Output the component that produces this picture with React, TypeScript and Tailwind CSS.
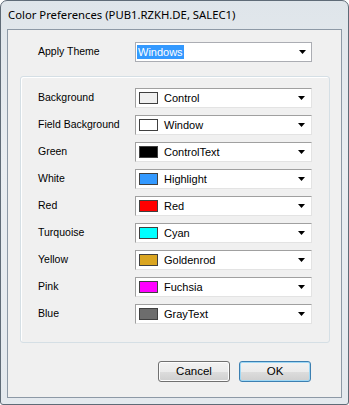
import React from 'react';

interface ColorRow {
  label: string;
  value: string;
  swatch: string;
}

const rows: ColorRow[] = [
  { label: 'Background', value: 'Control', swatch: 'bg-[#f0f0f0]' },
  { label: 'Field Background', value: 'Window', swatch: 'bg-white' },
  { label: 'Green', value: 'ControlText', swatch: 'bg-black' },
  { label: 'White', value: 'Highlight', swatch: 'bg-[#3399ff]' },
  { label: 'Red', value: 'Red', swatch: 'bg-[#ff0000]' },
  { label: 'Turquoise', value: 'Cyan', swatch: 'bg-[#00ffff]' },
  { label: 'Yellow', value: 'Goldenrod', swatch: 'bg-[#daa520]' },
  { label: 'Pink', value: 'Fuchsia', swatch: 'bg-[#ff00ff]' },
  { label: 'Blue', value: 'GrayText', swatch: 'bg-[#6d6d6d]' },
];

const Arrow: React.FC = () => (
  <svg width="7" height="4" viewBox="0 0 7 4" className="shrink-0">
    <path d="M0 0h7L3.5 4z" fill="#000" />
  </svg>
);

const ColorCombo: React.FC<{ row: ColorRow }> = ({ row }) => (
  <div className="flex items-center w-[177px] h-[20px] bg-white border border-t-[#a0a0a0] border-l-[#a0a0a0] border-r-[#e3e3e3] border-b-[#e3e3e3] pl-[3px] pr-[6px]">
    <span className={`w-[19px] h-[12px] border border-[#404040] ${row.swatch}`} />
    <span className="ml-[6px] grow text-[11px] text-black">{row.value}</span>
    <Arrow />
  </div>
);

const WinButton: React.FC<{ label: string; primary?: boolean }> = ({ label, primary }) => (
  <button
    type="button"
    className={`w-[72px] h-[21px] rounded-[3px] border text-[11.5px] text-black bg-[linear-gradient(#f2f2f2_0%,#ebebeb_50%,#dddddd_51%,#cfcfcf_100%)] ${
      primary
        ? 'border-[#3c7fb1] shadow-[inset_0_0_0_1px_#9fd8f5]'
        : 'border-[#707070] shadow-[inset_0_0_0_1px_#fcfcfc]'
    }`}
  >
    {label}
  </button>
);

export default function App() {
  return (
    <div
      className="w-[349px] h-[405px] bg-white"
      style={{ fontFamily: '"Liberation Sans", Arial, sans-serif' }}
    >
      <div className="flex flex-col w-full h-full rounded-t-[7px] rounded-b-[3px] border border-[#5f6b77] bg-[linear-gradient(180deg,#dfe5ea_0%,#e9edf1_40%,#e4e9ee_100%)] px-[6px] pb-[6px]">
        {/* TITLE */}
        <div className="h-[28px] flex items-center pl-[1px] pt-[1px]">
          <span
            className="text-[11.3px] text-black"
            style={{ fontFamily: '"Noto Sans", "Open Sans", sans-serif' }}
          >
            Color Preferences (PUB1.RZKH.DE, SALEC1)
          </span>
        </div>
        {/* CLIENT */}
        <div className="grow flex flex-col border border-[#8d99a6] bg-[#f0f0f0] px-[12px] pt-[12px]">
          <div className="flex items-center h-[20px]">
            <span className="w-[115px] pl-[18px] text-[10.5px] text-black">Apply Theme</span>
            <div className="flex items-center w-[177px] h-[20px] bg-white border border-[#abadb3] pl-[1px] pr-[5px]">
              <span className="bg-[#3399ff] text-white text-[11px] leading-[14px] px-[1px]">Windows</span>
              <span className="grow" />
              <Arrow />
            </div>
          </div>
          {/* COLORS */}
          <div className="mt-[14px] w-[310px] h-[267px] rounded-[3px] border border-[#d5dfe5] shadow-[inset_1px_1px_0_#ffffff] pl-[17px] pt-[11px] flex flex-col gap-[7px]">
            {rows.map((row) => (
              <div key={row.label} className="flex items-center">
                <span className="w-[97px] text-[10.5px] text-black">{row.label}</span>
                <ColorCombo row={row} />
              </div>
            ))}
          </div>
          <div className="flex justify-end gap-[9px] mt-[18px] pr-[18px]">
            <WinButton label="Cancel" />
            <WinButton label="OK" primary />
          </div>
        </div>
      </div>
    </div>
  );
}
